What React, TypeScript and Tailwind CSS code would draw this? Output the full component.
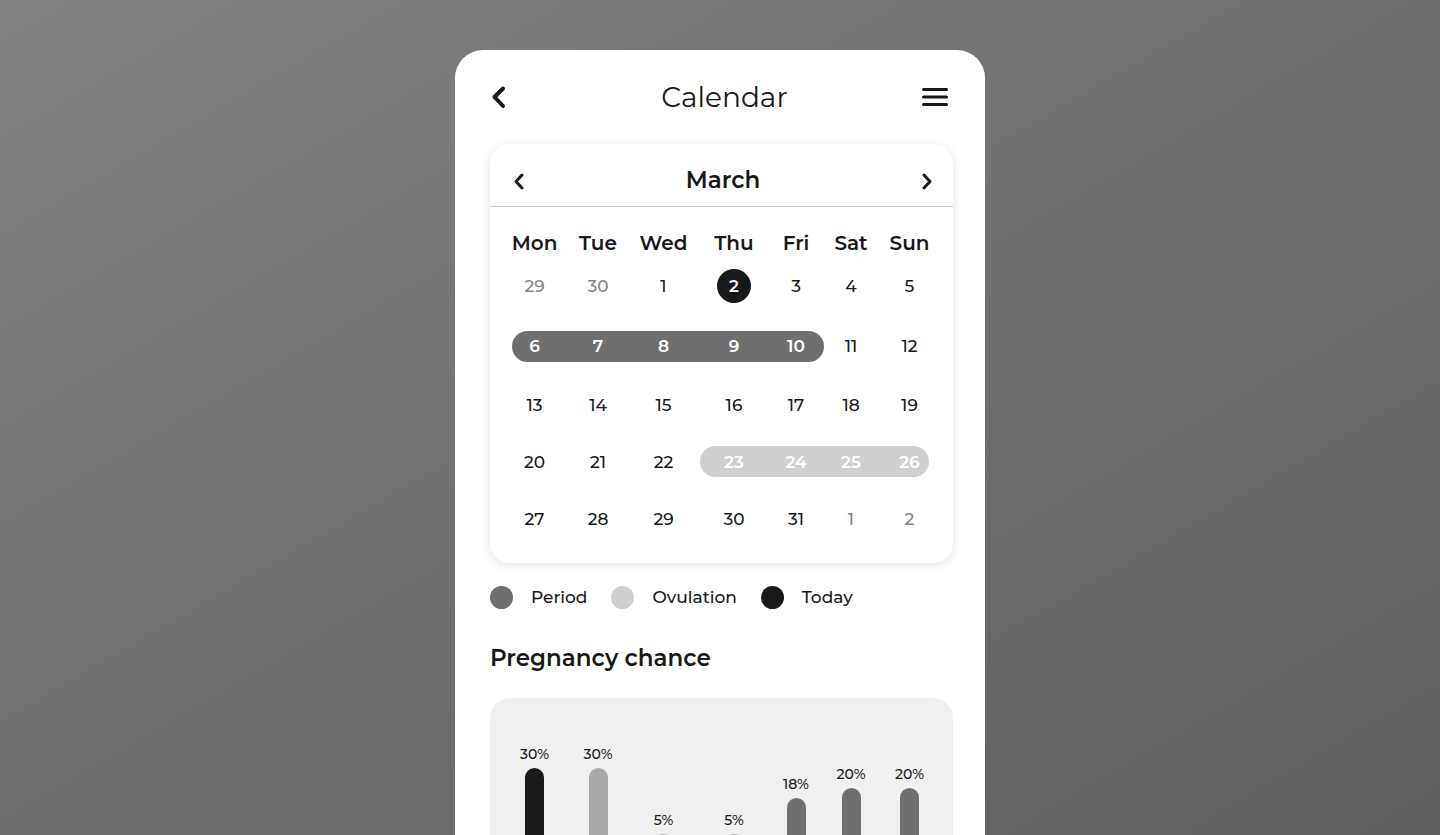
interface IDay {
    label: string
    kind?: 'muted' | 'today' | 'period' | 'ovulation'
    edge?: 'start' | 'end'
}

interface IBar {
    value: string
    height: number
    color: string
}

const weekDays = ['Mon', 'Tue', 'Wed', 'Thu', 'Fri', 'Sat', 'Sun']

const weeks: IDay[][] = [
    [{ label: '29', kind: 'muted' }, { label: '30', kind: 'muted' }, { label: '1' }, { label: '2', kind: 'today' }, { label: '3' }, { label: '4' }, { label: '5' }],
    [
        { label: '6', kind: 'period', edge: 'start' },
        { label: '7', kind: 'period' },
        { label: '8', kind: 'period' },
        { label: '9', kind: 'period' },
        { label: '10', kind: 'period', edge: 'end' },
        { label: '11' },
        { label: '12' },
    ],
    [{ label: '13' }, { label: '14' }, { label: '15' }, { label: '16' }, { label: '17' }, { label: '18' }, { label: '19' }],
    [
        { label: '20' },
        { label: '21' },
        { label: '22' },
        { label: '23', kind: 'ovulation', edge: 'start' },
        { label: '24', kind: 'ovulation' },
        { label: '25', kind: 'ovulation' },
        { label: '26', kind: 'ovulation', edge: 'end' },
    ],
    [{ label: '27' }, { label: '28' }, { label: '29' }, { label: '30' }, { label: '31' }, { label: '1', kind: 'muted' }, { label: '2', kind: 'muted' }],
]

const legend = [
    { label: 'Period', color: 'bg-[#6f6f6f]' },
    { label: 'Ovulation', color: 'bg-[#cfcfcf]' },
    { label: 'Today', color: 'bg-[#18191b]' },
]

const bars: IBar[] = [
    { value: '30%', height: 200, color: 'bg-[#18191b]' },
    { value: '30%', height: 200, color: 'bg-[#a8a8a8]' },
    { value: '5%', height: 134, color: 'bg-[#a8a8a8]' },
    { value: '5%', height: 134, color: 'bg-[#a8a8a8]' },
    { value: '18%', height: 170, color: 'bg-[#6f6f6f]' },
    { value: '20%', height: 180, color: 'bg-[#6f6f6f]' },
    { value: '20%', height: 180, color: 'bg-[#6f6f6f]' },
]

const kindStyles = {
    muted: 'text-[#858585]',
    today: '',
    period: 'bg-[#6f6f6f] text-white font-semibold',
    ovulation: 'bg-[#cfcfcf] text-white font-semibold',
}

const edgeStyles = {
    start: 'rounded-l-full',
    end: 'rounded-r-full',
}

function Day({ day, column }: { day: IDay; column: number }) {
    if (day.kind === 'today') {
        return (
            <span className="mx-auto flex size-[34px] items-center justify-center rounded-full bg-[#18191b] font-semibold text-white">
                {day.label}
            </span>
        )
    }

    // the outer columns are wider than the range pills, padding keeps the number centred
    const inset = column === 0 ? 'ml-3 pr-3' : column === 6 ? 'mr-3 pl-3' : ''

    return (
        <span className={`flex h-[31px] items-center justify-center ${inset} ${day.kind ? kindStyles[day.kind] : ''} ${day.edge ? edgeStyles[day.edge] : ''}`}>
            {day.label}
        </span>
    )
}

function MonthCard() {
    return (
        <section className="rounded-[20px] bg-white pb-4 shadow-[0_2px_8px_2px_rgba(0,0,0,0.08)]">
            <div className="flex h-[63px] items-center justify-between border-b border-[#c8c8c8] pt-3 pr-4 pl-[19px]">
                <button type="button" aria-label="Previous month" className="flex h-6 w-5 items-center justify-center">
                    <svg width="12" height="18" viewBox="0 0 12 18" fill="none" stroke="#18191b" strokeWidth="3" strokeLinecap="round" strokeLinejoin="round">
                        <path d="M9 3 3 9.500 9 16" />
                    </svg>
                </button>
                <h2 className="pb-0.5 text-[23px] leading-8 font-semibold">March</h2>
                <button type="button" aria-label="Next month" className="flex h-6 w-5 items-center justify-center">
                    <svg width="12" height="18" viewBox="0 0 12 18" fill="none" stroke="#18191b" strokeWidth="3" strokeLinecap="round" strokeLinejoin="round">
                        <path d="M3 3 9 9.500 3 16" />
                    </svg>
                </button>
            </div>
            <div className="pt-[23px] pr-3 pl-2.5">
                <table className="w-full table-fixed text-center">
                    <colgroup>
                        <col className="w-[69px]" />
                        <col className="w-[58px]" />
                        <col className="w-[73px]" />
                        <col className="w-[68px]" />
                        <col className="w-[56px]" />
                        <col className="w-[54px]" />
                        <col className="w-[63px]" />
                    </colgroup>
                    <thead>
                        <tr className="h-[26px]">
                            {weekDays.map((name) => (
                                <th key={name} scope="col" className="p-0 text-[20px] leading-6 font-semibold">{name}</th>
                            ))}
                        </tr>
                    </thead>
                    <tbody className="text-[17px] leading-6 font-medium">
                        {weeks.map((week, row) => (
                            <tr key={row} className={row < 2 ? 'h-[60px]' : 'h-[57px]'}>
                                {week.map((day, column) => (
                                    <td key={column} className="p-0 align-middle">
                                        <Day day={day} column={column} />
                                    </td>
                                ))}
                            </tr>
                        ))}
                    </tbody>
                </table>
            </div>
        </section>
    )
}

function Legend() {
    return (
        <ul className="mt-[22px] flex items-center gap-6 text-[17px] leading-6 font-medium">
            {legend.map((item) => (
                <li key={item.label} className="flex items-center gap-[18px]">
                    <span className={`size-[23px] rounded-full ${item.color}`}></span>
                    {item.label}
                </li>
            ))}
        </ul>
    )
}

function ChanceChart() {
    return (
        <section>
            <h2 className="mt-[33px] text-[23px] leading-8 font-semibold">Pregnancy chance</h2>
            <div className="mt-6 grid grid-cols-[69fr_58fr_73fr_68fr_56fr_54fr_63fr] items-end rounded-t-[20px] bg-[#f0f0f0] pt-[46px] pr-3 pl-2.5">
                {bars.map((bar, i) => (
                    <div key={i} className="flex flex-col items-center gap-1">
                        <span className="text-[14px] leading-5 font-medium">{bar.value}</span>
                        <div className={`w-[19px] rounded-full ${bar.color}`} style={{ height: bar.height }}></div>
                    </div>
                ))}
            </div>
        </section>
    )
}

export default function App() {
    return (
        <main className="flex h-screen justify-center overflow-hidden bg-linear-to-br from-[#828282] to-[#5e5e5e] pt-[50px] font-['Montserrat','Inter',sans-serif] text-[#18191b]">
            <div className="h-max w-full max-w-[530px] rounded-t-[28px] bg-white pr-8 pl-[35px]">
                <header className="flex h-[94px] items-center justify-between pr-1">
                    <button type="button" aria-label="Back" className="flex h-8 w-10 items-center">
                        <svg width="18" height="24" viewBox="0 0 18 24" fill="none" stroke="#18191b" strokeWidth="4" strokeLinecap="round" strokeLinejoin="round">
                            <path d="M13 3.500 4.500 12l8.500 9" />
                        </svg>
                    </button>
                    <h1 className="text-[28px] leading-10 font-normal">Calendar</h1>
                    <button type="button" aria-label="Menu" className="flex h-8 w-[30px] items-center justify-end">
                        <svg width="28" height="20" viewBox="0 0 28 20" fill="none" stroke="#18191b" strokeWidth="3" strokeLinecap="round">
                            <path d="M2.500 2.500h23M2.500 10h23M2.500 17.500h23" />
                        </svg>
                    </button>
                </header>
                <MonthCard />
                <Legend />
                <ChanceChart />
            </div>
        </main>
    )
}
